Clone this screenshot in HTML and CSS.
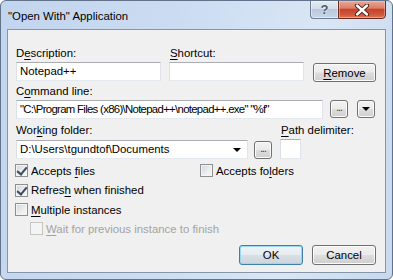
FILE: index.html
```html
<!DOCTYPE html>
<html lang="en">
<head>
  <meta charset="UTF-8">
  <title>"Open With" Application</title>
  <link rel="stylesheet" href="styles.css">
</head>
<body>
  <div class="window">
    <div class="titlebar">
      <span class="title">"Open With" Application</span>
      <div class="caption-buttons">
        <span class="cap-btn help">?</span>
        <span class="cap-btn close">
          <svg width="16" height="12" viewBox="0 0 16 12">
            <path d="M3 1.5 L13 10.5 M13 1.5 L3 10.5" stroke="#3a1a14" stroke-width="4.2" stroke-linecap="round"/>
            <path d="M3 1.5 L13 10.5 M13 1.5 L3 10.5" stroke="#ffffff" stroke-width="2.4" stroke-linecap="round"/>
          </svg>
        </span>
      </div>
    </div>

    <div class="client">
      <!-- description / shortcut -->
      <div class="labels">
        <span class="lbl-desc">D<u>e</u>scription:</span>
        <span class="lbl-shortcut"><u>S</u>hortcut:</span>
      </div>
      <div class="row">
        <div class="textbox desc">Notepad++</div>
        <div class="textbox shortcut"></div>
        <span class="btn remove"><span><u>R</u>emove</span></span>
      </div>

      <!-- command line -->
      <div class="labels lbl-row2">
        <span>C<u>o</u>mmand line:</span>
      </div>
      <div class="row">
        <div class="textbox command">"C:\Program Files (x86)\Notepad++\notepad++.exe" "%f"</div>
        <span class="btn small browse-cmd">...</span>
        <span class="btn small menu"><span class="arrow"></span></span>
      </div>

      <!-- working folder -->
      <div class="labels lbl-row3">
        <span class="lbl-folder">Wor<u>k</u>ing folder:</span>
        <span class="lbl-delim"><u>P</u>ath delimiter:</span>
      </div>
      <div class="row">
        <div class="textbox combo">D:\Users\tgundtof\Documents<span class="arrow"></span></div>
        <span class="btn small browse-dir">...</span>
        <div class="textbox delim"></div>
      </div>

      <!-- options -->
      <div class="checks">
        <div class="check-row">
          <label class="check col1"><span class="box checked"></span><span>Accepts <u>f</u>iles</span></label>
          <label class="check col2"><span class="box"></span><span>Accepts fo<u>l</u>ders</span></label>
        </div>
        <div class="check-row tall">
          <label class="check col1"><span class="box checked"></span><span>Refres<u>h</u> when finished</span></label>
        </div>
        <div class="check-row">
          <label class="check col1"><span class="box"></span><span><u>M</u>ultiple instances</span></label>
        </div>
        <div class="check-row">
          <label class="check indent disabled"><span class="box"></span><span><u>W</u>ait for previous instance to finish</span></label>
        </div>
      </div>

      <div class="actions">
        <span class="btn default">OK</span>
        <span class="btn">Cancel</span>
      </div>
    </div>
  </div>
</body>
</html>
```

FILE: styles.css
```css
* {
  box-sizing: border-box;
}
body {
  margin: 0;
  font-family: "Segoe UI", "Liberation Sans", Arial, sans-serif;
  font-size: 11.4px;
  color: #000;
  background: #fff;
}
u {
  text-decoration-thickness: 1px;
  text-underline-offset: 2px;
}
.window {
  width: 393px;
  height: 280px;
  display: flex;
  flex-direction: column;
  border: 1px solid #62728a;
  border-radius: 6px;
  background: linear-gradient(100deg, #c2d5ee 0, #cbdcf1 40%, #d9e6f5 75%, #c8d9ee 100%);
  overflow: hidden;
}
.titlebar {
  height: 28px;
  display: flex;
  align-items: flex-start;
}
.title {
  padding: 8px 0 0 7px;
  line-height: 14px;
}
.caption-buttons {
  display: flex;
  margin: -1px 6px 0 auto;
}
.cap-btn {
  height: 19px;
  display: flex;
  align-items: center;
  justify-content: center;
}
.help {
  width: 28px;
  border: 1px solid #6f7e94;
  border-right: none;
  border-radius: 0 0 0 4px;
  background: linear-gradient(180deg, #e4ebf4 0, #d2dcea 45%, #b9c8db 50%, #c9d6e6 100%);
  box-shadow: inset 0 0 0 1px rgba(255,255,255,0.45);
  color: #4b5b72;
  font-weight: bold;
  font-size: 13px;
  text-shadow: 0 0 2px #fff;
}
.close {
  width: 48px;
  border: 1px solid #6a2b21;
  border-radius: 0 0 4px 0;
  background: linear-gradient(180deg, #e9a898 0, #dc7d66 42%, #c5442b 50%, #d0573c 80%, #e07a5a 100%);
  box-shadow: inset 0 0 0 1px rgba(255,220,210,0.4);
}
.client {
  flex: 1;
  margin: 0 6px 6px;
  border: 1px solid #8696aa;
  background: #f0f0f0;
  padding: 16px 9px 0 8px;
}
.labels {
  display: flex;
  height: 16px;
  line-height: 14px;
}
.lbl-desc {
  width: 154px;
}
.lbl-row2 {
  margin-top: 2px;
  height: 16px;
}
.lbl-row3 {
  margin-top: 1px;
  height: 19px;
  padding-top: 2px;
}
.lbl-folder {
  width: 265px;
}
.row {
  display: flex;
  align-items: flex-start;
  height: 20px;
}
.textbox {
  height: 19px;
  background: #fff;
  border: 1px solid;
  border-color: #abadb3 #e2e3ea #e3e9ef #dbdfe6;
  padding: 0 3px;
  line-height: 17px;
  white-space: nowrap;
  overflow: hidden;
  position: relative;
}
.desc {
  width: 145px;
}
.shortcut {
  width: 135px;
  margin-left: 8px;
}
.command {
  width: 307px;
  letter-spacing: -0.7px;
}
.combo {
  width: 232px;
}
.delim {
  width: 21px;
  margin-left: 8px;
  height: 20px;
  margin-top: -1px;
}
.btn {
  display: flex;
  align-items: center;
  justify-content: center;
  height: 19px;
  border: 1px solid #707070;
  border-radius: 3px;
  background: linear-gradient(180deg, #f2f2f2 0, #ebebeb 48%, #dddddd 52%, #cfcfcf 100%);
  box-shadow: inset 0 0 0 1px #fbfbfb;
  line-height: 14px;
}
.remove {
  width: 63px;
  margin: 1px 0 0 9px;
}
.small {
  width: 18px;
  height: 18px;
  font-size: 10px;
  align-items: flex-end;
  padding-bottom: 2px;
  letter-spacing: -1px;
  color: #333;
}
.browse-cmd {
  margin-left: 7px;
}
.menu {
  margin-left: 9px;
  align-items: center;
  padding: 0;
}
.browse-dir {
  margin: 1px 0 0 6px;
}
.arrow {
  display: block;
  width: 0;
  height: 0;
  border-left: 4px solid transparent;
  border-right: 4px solid transparent;
  border-top: 4px solid #000;
}
.combo .arrow {
  position: absolute;
  right: 6px;
  top: 7px;
}
.checks {
  margin-top: 1px;
}
.check-row {
  display: flex;
  height: 19px;
  align-items: center;
}
.check-row.tall {
  height: 20px;
}
.check {
  display: flex;
  align-items: center;
  line-height: 14px;
}
.col1 {
  margin-left: -1px;
  width: 185px;
}
.indent {
  margin-left: 14px;
}
.box {
  width: 13px;
  height: 13px;
  margin-right: 3px;
  border: 1px solid #8e8f8f;
  background: linear-gradient(135deg, #d0d4da 0, #eceef0 60%, #f7f7f7 100%);
  box-shadow: inset 0 0 0 1px #f4f4f4;
  position: relative;
}
.box.checked::after {
  content: "";
  position: absolute;
  left: 3px;
  top: 0px;
  width: 4px;
  height: 8px;
  border-right: 2px solid #3c4a5c;
  border-bottom: 2px solid #3c4a5c;
  transform: rotate(40deg);
}
.disabled {
  color: #a3a3a3;
}
.disabled .box {
  border-color: #c5c5c5;
  background: #f4f4f4;
  box-shadow: none;
}
.actions {
  display: flex;
  justify-content: flex-end;
  gap: 9px;
  margin-top: 7px;
}
.actions .btn {
  width: 64px;
  height: 20px;
}
.btn.default {
  border-color: #3c7fb1;
  box-shadow: inset 0 0 0 1px #9ad8f2;
  background: linear-gradient(180deg, #eef3f6 0, #e6ecf0 48%, #d7dfe5 52%, #cbd5dc 100%);
}
```
